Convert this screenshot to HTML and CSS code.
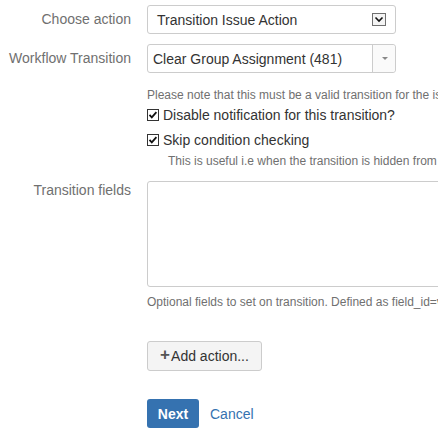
FILE: index.html
```html
<!DOCTYPE html>
<html>
<head>
<meta charset="utf-8">
<link rel="stylesheet" href="styles.css">
</head>
<body>
<div class="form">
  <div class="row row-first">
    <div class="lbl lbl-select">Choose action</div>
    <div class="ctl">
      <div class="select">
        <span class="select-text">Transition Issue Action</span>
        <span class="native-arrow">
          <svg width="14" height="13" viewBox="0 0 14 13"><rect x="0.5" y="0.5" width="13" height="12" fill="#f4f4f4" stroke="#6f6f6f"/><polyline points="3.5,4.5 7,8 10.5,4.5" fill="none" stroke="#111" stroke-width="1.6"/></svg>
        </span>
      </div>
    </div>
  </div>

  <div class="row row-second">
    <div class="lbl lbl-select">Workflow Transition</div>
    <div class="ctl">
      <div class="select select2">
        <span class="select-text s2-text">Clear Group Assignment (481)</span>
        <span class="s2-arrow"><span class="tri"></span></span>
      </div>
      <div class="desc desc-first">Please note that this must be a valid transition for the issue status and workflow</div>
      <div class="check check-first">
        <svg class="cb" width="12" height="12" viewBox="0 0 12 12"><rect x="0.5" y="0.5" width="11" height="11" fill="#fff" stroke="#333"/><polyline points="2.5,5.8 4.8,8.3 9.4,3.1" fill="none" stroke="#111" stroke-width="1.8"/></svg>
        <span>Disable notification for this transition?</span>
      </div>
      <div class="check check-second">
        <svg class="cb" width="12" height="12" viewBox="0 0 12 12"><rect x="0.5" y="0.5" width="11" height="11" fill="#fff" stroke="#333"/><polyline points="2.5,5.8 4.8,8.3 9.4,3.1" fill="none" stroke="#111" stroke-width="1.8"/></svg>
        <span>Skip condition checking</span>
      </div>
      <div class="desc desc-indent">This is useful i.e when the transition is hidden from users</div>
    </div>
  </div>

  <div class="row row-third">
    <div class="lbl lbl-area">Transition fields</div>
    <div class="ctl">
      <div class="textarea"></div>
      <div class="desc desc-area">Optional fields to set on transition. Defined as field_id=value</div>
    </div>
  </div>

  <div class="row row-add">
    <div class="lbl"></div>
    <div class="ctl">
      <button class="btn-add"><span class="plus">+</span>Add action...</button>
    </div>
  </div>

  <div class="row row-buttons">
    <div class="lbl"></div>
    <div class="ctl buttons">
      <button class="btn-next">Next</button>
      <a class="cancel">Cancel</a>
    </div>
  </div>
</div>
</body>
</html>
```

FILE: styles.css
```css
html, body {
  margin: 0;
  padding: 0;
  background: #fff;
  overflow: hidden;
}
body {
  font-family: "Liberation Sans", Arial, sans-serif;
  font-size: 14px;
  color: #333;
}
.form {
  padding-top: 5px;
  width: 800px;
}
.row {
  display: flex;
  align-items: flex-start;
}
.lbl {
  width: 131px;
  flex: 0 0 131px;
  padding-right: 16px;
  text-align: right;
  color: #707070;
  font-size: 14px;
  white-space: nowrap;
}
.lbl-select {
  line-height: 29px;
}
.lbl-area {
  line-height: 18px;
}
.ctl {
  flex: 1 1 auto;
  white-space: nowrap;
}
.row-second {
  margin-top: 10px;
}
.select {
  box-sizing: border-box;
  width: 249px;
  height: 29px;
  border: 1px solid #ccc;
  border-radius: 3px;
  display: flex;
  align-items: center;
  background: #fff;
}
.select-text {
  flex: 1 1 auto;
  padding-left: 9px;
  color: #333;
}
.s2-text {
  padding-left: 5px;
}
.native-arrow {
  display: flex;
  margin-right: 9px;
  margin-top: -1px;
}
.s2-arrow {
  align-self: stretch;
  width: 22px;
  border-left: 1px solid #ccc;
  background: #fafafa;
  display: flex;
  align-items: center;
  justify-content: center;
  border-radius: 0 3px 3px 0;
}
.tri {
  width: 0;
  height: 0;
  border-left: 3px solid transparent;
  border-right: 3px solid transparent;
  border-top: 3px solid #888;
  margin-left: 1px;
}
.desc {
  font-size: 12px;
  line-height: 16px;
  color: #707070;
}
.desc-first {
  margin-top: 14px;
}
.check {
  display: flex;
  align-items: center;
  height: 20px;
  color: #333;
  font-size: 14px;
}
.check .cb {
  margin-right: 4px;
  flex: 0 0 auto;
}
.check-first {
  margin-top: 2px;
}
.check-second {
  margin-top: 5px;
}
.desc-indent {
  margin-top: 3px;
  padding-left: 21px;
}
.row-third {
  margin-top: 12px;
}
.textarea {
  box-sizing: border-box;
  width: 420px;
  height: 106px;
  border: 1px solid #ccc;
  border-radius: 3px;
}
.desc-area {
  margin-top: 7px;
}
.row-add {
  margin-top: 31px;
}
.btn-add {
  box-sizing: border-box;
  height: 30px;
  width: 115px;
  padding: 0;
  border: 1px solid #ccc;
  border-radius: 3px;
  background: #f4f4f4;
  font-family: "Liberation Sans", Arial, sans-serif;
  font-size: 14px;
  color: #333;
  display: flex;
  align-items: center;
  justify-content: center;
}
.plus {
  font-weight: bold;
  font-size: 17px;
  color: #555;
  margin-right: 1px;
  margin-top: -2px;
}
.row-buttons {
  margin-top: 28px;
}
.buttons {
  display: flex;
  align-items: center;
}
.btn-next {
  box-sizing: border-box;
  height: 29px;
  width: 52px;
  border: 0;
  border-radius: 3px;
  background: #3572b0;
  color: #fff;
  font-weight: bold;
  font-family: "Liberation Sans", Arial, sans-serif;
  font-size: 14px;
}
.cancel {
  margin-left: 11px;
  color: #3572b0;
  font-size: 14px;
}
```
